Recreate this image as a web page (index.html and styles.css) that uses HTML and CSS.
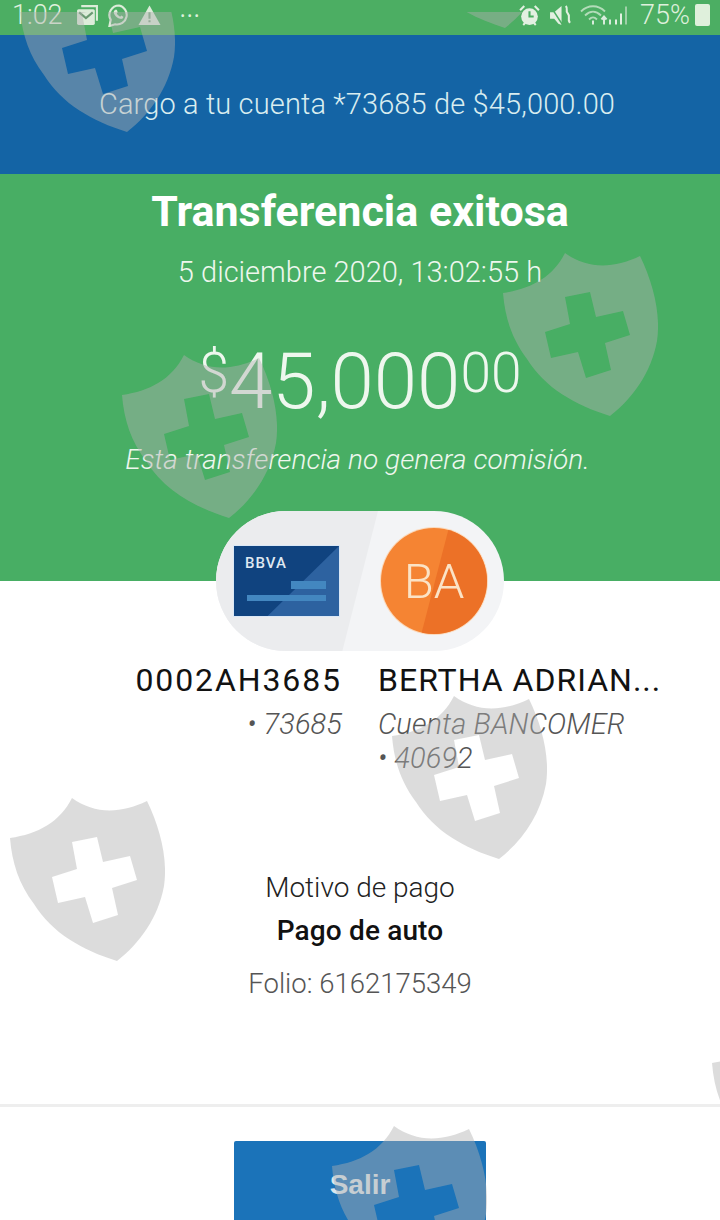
FILE: index.html
```html
<!DOCTYPE html>
<html lang="es">
<head>
<meta charset="utf-8">
<title>Transferencia exitosa</title>
<link rel="stylesheet" href="styles.css">
</head>
<body>
<svg class="defs" width="0" height="0" aria-hidden="true">
  <defs>
    <symbol id="shield" viewBox="0 0 155 163">
      <path fill-rule="evenodd" d="M0 40C28 36 50 24 62 0C84 16 110 16 137 3C150 30 158 60 154 88C148 120 130 145 107 163C72 152 42 135 24 106C9 86 2 65 0 40ZM62 44L87 39L93 64L120 58L127 82L102 90L108 117L83 125L75 99L48 105L42 79L67 71Z"/>
    </symbol>
  </defs>
</svg>
<main class="screen">
  <header class="status">
    <div class="status-group">
      <span class="time">1:02</span>
      <svg class="ico" viewBox="0 0 22 22"><path d="M5 1h16v15h-2V3H5Z" fill="#dcecd9"/><rect x="1" y="5" width="17" height="15" rx="1.500" fill="#dcecd9"/><path d="M3 8l6.500 5.500L16 8" fill="none" stroke="#6a9a72" stroke-width="2"/></svg>
      <svg class="ico" viewBox="0 0 24 24"><path d="M12.500 1.500a10 10 0 0 0-8.600 15L2.500 23l6-1.800a10 10 0 1 0 4-19.700Z" fill="none" stroke="#dcecd9" stroke-width="2.200"/><path d="M8.800 6.500c1-.8 1.500-.6 2 1l.4 1.200-1 1.200c.8 1.500 2 2.600 3.500 3.300l1.200-1.100 2.100 1.100c.2 1.600-1.500 2.600-3 2.300-3.500-.8-6.500-4-7-6.700-.1-1 .6-2 1.800-3.300Z" fill="#dcecd9"/></svg>
      <svg class="ico" viewBox="0 0 22 22"><path d="M11 1.500L21.500 20H.5Z" fill="#dcecd9"/><path d="M11 8v6M11 15.500v2" stroke="#7da884" stroke-width="2"/></svg>
      <span class="dots">&#8226;&#8226;&#8226;</span>
    </div>
    <div class="status-group">
      <svg class="ico" viewBox="0 0 22 22"><circle cx="11" cy="12" r="8" fill="#e3f0e1"/><path d="M11 7v5h4" fill="none" stroke="#4cae63" stroke-width="2"/><path d="M2 6l4-4M20 6l-4-4M5 20l2-2M17 20l-2-2" stroke="#e3f0e1" stroke-width="2"/></svg>
      <svg class="ico" viewBox="0 0 22 22"><path d="M1 8h4l7-6v18l-3-1-4-5H1Z" fill="#e3f0e1"/><path d="M2 3l11 17" stroke="#4cae63" stroke-width="1.500"/><path d="M16 2c3 3-1 4 2 7s-1 5 2 9" fill="none" stroke="#e3f0e1" stroke-width="2"/></svg>
      <svg class="ico ico-net" viewBox="0 0 50 22"><g fill="none" stroke="#b3dcb9" stroke-width="1.800"><path d="M1 7c7-7 17-7 24 0M5 11c5-5 11-5 16 0M9 15c3-3 5-3 8 0"/></g><path d="M13 16v4M24 13v7M21.500 15l2.500-3 2.500 3M30 20v-5" stroke="#d8ecdc" stroke-width="2" fill="none"/><rect x="35" y="15" width="2" height="5" fill="#e3f0e1"/><rect x="40" y="9" width="2" height="11" fill="#e3f0e1"/><rect x="45" y="2" width="2" height="18" fill="#9fd0a8"/></svg>
      <span class="pct">75%</span>
      <span class="battery"></span>
    </div>
  </header>

  <section class="charge">
    <p class="charge-text">Cargo a tu cuenta *73685 de $45,000.00</p>
  </section>

  <section class="hero">
    <h1 class="hero-title">Transferencia exitosa</h1>
    <p class="hero-date">5 diciembre 2020, 13:02:55 h</p>
    <p class="amount"><sup class="amount-sm">$</sup>45,000<sup class="amount-sm">00</sup></p>
    <p class="note">Esta transferencia no genera comisión.</p>
  </section>

  <section class="parties">
    <div class="pill">
      <div class="pill-left">
        <div class="card">
          <span class="card-shade"></span>
          <span class="card-logo">BBVA</span>
          <span class="card-line card-line-short"></span>
          <span class="card-line"></span>
        </div>
      </div>
      <div class="pill-right">
        <div class="avatar"><span class="avatar-shade"></span><span class="avatar-text">BA</span></div>
      </div>
    </div>
    <div class="accounts">
      <div class="account account-from">
        <p class="account-name">0002AH3685</p>
        <p class="account-sub">&#8226; 73685</p>
      </div>
      <div class="account account-to">
        <p class="account-name">BERTHA ADRIAN...</p>
        <p class="account-sub">Cuenta BANCOMER<br>&#8226; 40692</p>
      </div>
    </div>
  </section>

  <section class="details">
    <p class="reason-label">Motivo de pago</p>
    <p class="reason">Pago de auto</p>
    <p class="folio">Folio: 6162175349</p>
  </section>

  <footer class="footer">
    <button class="exit" type="button">Salir</button>
  </footer>

  <svg class="mark mark-a"><use href="#shield"/></svg>
  <svg class="mark mark-b"><use href="#shield"/></svg>
  <svg class="mark mark-c"><use href="#shield"/></svg>
  <svg class="mark mark-d"><use href="#shield"/></svg>
  <svg class="mark mark-e"><use href="#shield"/></svg>
  <svg class="mark mark-f"><use href="#shield"/></svg>
  <svg class="mark mark-g"><use href="#shield"/></svg>
  <svg class="mark mark-h"><use href="#shield"/></svg>
</main>
</body>
</html>
```
FILE: styles.css
```css
* { box-sizing: border-box; }
html, body { margin: 0; padding: 0; }
body { background: #fff; font-family: Roboto, "Liberation Sans", sans-serif; color: #121212; }
p, h1 { margin: 0; }
.defs { position: absolute; }
.screen { position: relative; width: 720px; height: 1220px; overflow: hidden; display: flex; flex-direction: column; background: #fff; }

.status { height: 35px; background: #4cae63; display: flex; justify-content: space-between; align-items: center; padding: 0 10px 5px 12px; color: #dff0dc; flex: none; }
.status-group { display: flex; align-items: center; gap: 8px; }
.time { font-size: 27px; font-weight: 300; line-height: 30px; margin-right: 5px; }
.ico { width: 23px; height: 23px; flex: none; }
.ico-net { width: 50px; }
.dots { font-size: 13px; letter-spacing: 2.500px; margin-left: 12px; }
.pct { font-size: 27px; font-weight: 300; line-height: 30px; margin-left: 2px; }
.battery { width: 15px; height: 22px; background: #dff0dc; border-radius: 2px; margin-left: -3px; }

.charge { height: 139px; background: #1464a5; display: flex; justify-content: center; padding: 50px 6px 0 0; flex: none; }
.charge-text { font-size: 29px; font-weight: 300; letter-spacing: .13px; color: #d9edf0; line-height: 38px; }

.hero { height: 407px; background: #48ae64; display: flex; flex-direction: column; align-items: center; color: #eef7ee; flex: none; }
.hero-title { font-size: 43px; font-weight: 700; color: #fff; line-height: 48px; margin-top: 13px; }
.hero-date { font-size: 29px; font-weight: 300; line-height: 36px; margin-top: 19px; }
.amount { font-size: 78px; font-weight: 300; line-height: 90px; margin-top: 47px; }
.amount-sm { font-size: 55px; line-height: 0; vertical-align: 16px; }
.note { font-size: 28px; font-weight: 300; font-style: italic; letter-spacing: .05px; line-height: 36px; margin: 15px 5px 0 0; }

.parties { display: flex; flex-direction: column; align-items: center; flex: none; }
.pill { width: 288px; height: 140px; margin-top: -70px; border-radius: 70px; overflow: hidden; display: flex; background: #f3f4f6; position: relative; }
.pill-left { width: 162px; background: #ebecee; clip-path: polygon(0 0, 100% 0, 78% 100%, 0 100%); display: flex; align-items: center; padding-left: 18px; }
.pill-right { flex: 1; display: flex; align-items: center; padding-left: 3px; }
.card { width: 105px; height: 70px; background: #10437f; outline: 1px solid #dbe8f6; position: relative; overflow: hidden; }
.card-shade { position: absolute; inset: 0; background: #2d62a0; clip-path: polygon(100% 0, 100% 100%, 32% 100%); }
.card-logo { position: absolute; left: 11px; top: 7px; font-size: 15px; line-height: 20px; font-weight: 500; letter-spacing: 1px; color: #dfe8f2; }
.card-line { position: absolute; left: 13px; right: 13px; top: 49px; height: 6px; background: #4387c0; }
.card-line-short { left: 57px; top: 35px; height: 8px; }
.avatar { width: 106px; height: 106px; border-radius: 50%; background: #f58433; box-shadow: 0 0 0 1px #fbd9bb; position: relative; overflow: hidden; display: flex; align-items: center; justify-content: center; }
.avatar-shade { position: absolute; inset: 0; background: #ec7127; clip-path: polygon(64% 0, 100% 0, 100% 100%, 38% 100%); }
.avatar-text { position: relative; font-size: 49px; font-weight: 300; color: #fbe3c6; }

.accounts { display: flex; width: 100%; margin-top: 8px; }
.account-from { width: 342px; text-align: right; flex: none; }
.account-to { margin-left: 36px; }
.account-name { font-size: 32px; font-weight: 400; color: #121212; letter-spacing: 1px; line-height: 42px; white-space: nowrap; }
.account-from .account-name { letter-spacing: 1.900px; }
.account-sub { font-size: 29px; font-weight: 300; font-style: italic; color: #555; letter-spacing: .1px; line-height: 34px; margin-top: 6px; white-space: nowrap; }

.details { display: flex; flex-direction: column; align-items: center; margin-top: 95px; flex: none; }
.reason-label { font-size: 28px; font-weight: 300; line-height: 36px; color: #222; }
.reason { font-size: 28px; font-weight: 500; letter-spacing: .15px; line-height: 36px; margin-top: 7px; color: #111; }
.folio { font-size: 27.500px; font-weight: 300; line-height: 36px; margin-top: 17px; color: #555; }

.footer { position: absolute; left: 0; right: 0; top: 1104px; height: 116px; background: #fff; border-top: 3px solid #eeeeee; display: flex; justify-content: center; padding-top: 34px; }
.exit { width: 252px; height: 100px; background: #1b73b9; color: #d9e6ee; border: 0; border-radius: 2px 2px 0 0; font-family: "Liberation Sans", sans-serif; font-weight: 700; font-size: 28px; padding: 0 0 12px; }

.mark { position: absolute; width: 155px; height: 163px; fill: rgba(175,175,175,.44); pointer-events: none; }
.mark-a { left: 10px; top: 798px; }
.mark-b { left: 122px; top: 355px; }
.mark-c { left: 503px; top: 253px; }
.mark-d { left: 392px; top: 696px; }
.mark-e { left: 20px; top: -31px; clip-path: inset(43px 0 0 0); }
.mark-f { left: 332px; top: 1126px; }
.mark-g { left: 398px; top: -135px; clip-path: inset(147px 0 0 0); }
.mark-h { left: 712px; top: 1023px; clip-path: inset(0 0 86px 0); }
```
